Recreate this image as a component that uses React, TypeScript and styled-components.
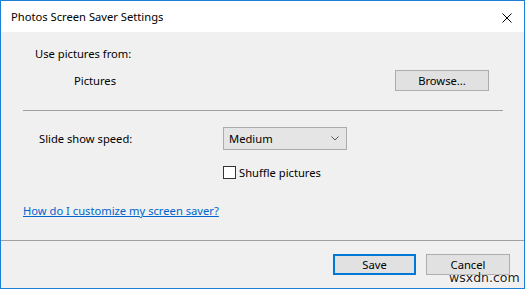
import React from 'react';
import styled, { createGlobalStyle } from 'styled-components';

const GlobalStyle = createGlobalStyle`
  html, body {
    margin: 0;
    padding: 0;
    background: #ffffff;
  }
  body {
    font-family: "Segoe UI", "Noto Sans", sans-serif;
    font-size: 11.2px;
    color: #000;
  }
`;

const Window = styled.div`
  position: relative;
  box-sizing: border-box;
  width: 525px;
  height: 289px;
  border: 1px solid #1c7ed6;
  display: flex;
  flex-direction: column;
  background: #f0f0f0;
`;

const TitleBar = styled.div`
  height: 31px;
  background: #ffffff;
  display: flex;
  align-items: center;
  justify-content: space-between;
  padding: 0 11px 0 10px;
`;

const Title = styled.span`
  line-height: 16px;
  padding-top: 1px;
`;

const CloseButton = styled.button`
  border: 0;
  background: transparent;
  padding: 0;
  width: 12px;
  height: 12px;
  display: flex;
  align-items: center;
  justify-content: center;
  margin-top: 2px;
`;

const Body = styled.div`
  flex: 1;
  display: flex;
  flex-direction: column;
  padding: 0 21px 0 22px;
`;

const Label = styled.div<{ $indent: number; $top?: number }>`
  line-height: 16px;
  padding-left: ${(p) => p.$indent}px;
  margin-top: ${(p) => p.$top ?? 0}px;
`;

const SourceRow = styled.div`
  display: flex;
  align-items: center;
  justify-content: space-between;
  height: 21px;
  margin-top: 8px;
  padding-left: 51px;
  padding-right: 14px;
`;

const Button = styled.button<{ $default?: boolean }>`
  box-sizing: border-box;
  height: 21px;
  width: ${(p) => (p.$default ? 83 : 84)}px;
  background: #e1e1e1;
  border: ${(p) => (p.$default ? '2px solid #0078d7' : '1px solid #adadad')};
  font-family: inherit;
  font-size: 11.2px;
  color: #000;
  padding: 0;
  line-height: 16px;
`;

const BrowseButton = styled(Button)`
  width: 94px;
`;

const Separator = styled.hr`
  border: 0;
  height: 1px;
  background: #a0a0a0;
  margin: 19px 0 0;
`;

const FieldRow = styled.div`
  display: grid;
  grid-template-columns: 200px 124px;
  align-items: center;
  margin-top: 16px;
`;

const Select = styled.div`
  box-sizing: border-box;
  height: 23px;
  background: #e5e5e5;
  border: 1px solid #acacac;
  display: flex;
  align-items: center;
  justify-content: space-between;
  padding: 0 7px 0 5px;
`;

const CheckRow = styled.label`
  display: flex;
  align-items: center;
  gap: 3px;
  height: 13px;
  margin: 16px 0 0 200px;
`;

const Box = styled.span`
  box-sizing: border-box;
  width: 13px;
  height: 13px;
  background: #fff;
  border: 1px solid #333;
`;

const HelpLink = styled.a`
  align-self: flex-start;
  color: #0066cc;
  text-decoration: underline;
  line-height: 16px;
  margin-top: 24px;
`;

const Footer = styled.div`
  height: 48px;
  box-sizing: border-box;
  border-top: 1px solid #a0a0a0;
  display: flex;
  justify-content: flex-end;
  align-items: flex-start;
  gap: 10px;
  padding: 13px 14px 0 0;
`;

const Watermark = styled.span`
  position: absolute;
  left: 448px;
  top: 270px;
  line-height: 14px;
  font-family: "DejaVu Sans", sans-serif;
  font-size: 12.5px;
  color: #222;
  text-shadow: 0 0 2px #fff, 0 0 2px #fff;
`;

export default function App() {
  return (
    <>
      <GlobalStyle />
      <Window>
        <TitleBar>
          <Title>Photos Screen Saver Settings</Title>
          <CloseButton aria-label="Close">
            <svg width="10" height="10" viewBox="0 0 10 10">
              <path d="M0.5 0.5 L9.5 9.5 M9.5 0.5 L0.5 9.5" stroke="#000" strokeWidth="1" />
            </svg>
          </CloseButton>
        </TitleBar>
        <Body>
          <Label $indent={12} $top={14}>Use pictures from:</Label>
          <SourceRow>
            <span>Pictures</span>
            <BrowseButton>Browse...</BrowseButton>
          </SourceRow>
          <Separator />
          <FieldRow>
            <Label $indent={16}>Slide show speed:</Label>
            <Select>
              <span>Medium</span>
              <svg width="8" height="5" viewBox="0 0 8 5">
                <path d="M0.5 0.5 L4 4 L7.5 0.5" stroke="#555" strokeWidth="1" fill="none" />
              </svg>
            </Select>
          </FieldRow>
          <CheckRow>
            <Box />
            <span>Shuffle pictures</span>
          </CheckRow>
          <HelpLink href="#">How do I customize my screen saver?</HelpLink>
        </Body>
        <Footer>
          <Button $default>Save</Button>
          <Button>Cancel</Button>
        </Footer>
        <Watermark>wsxdn.com</Watermark>
      </Window>
    </>
  );
}
